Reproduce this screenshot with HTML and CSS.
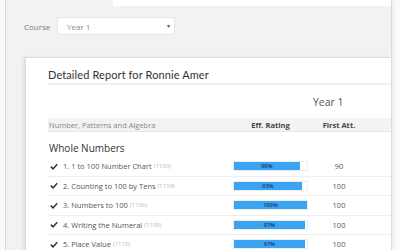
FILE: index.html
```html
<!DOCTYPE html>
<html>
<head>
<meta charset="utf-8">
<link rel="stylesheet" href="styles.css">
</head>
<body>
<div class="page">
  <div class="topbar"></div>
  <div class="filter">
    <span class="filter-label">Course</span>
    <div class="select"><span>Year 1</span><span class="caret">&#9662;</span></div>
  </div>
  <div class="card">
    <h2 class="title">Detailed Report for Ronnie Amer</h2>
    <div class="year-row"><span class="year">Year 1</span></div>
    <div class="head-row">
      <span class="c-name">Number, Patterns and Algebra</span>
      <span class="c-rating">Eff. Rating</span>
      <span class="c-first">First Att.</span>
    </div>
    <div class="section">Whole Numbers</div>
    <div class="row">
      <span class="c-name"><svg class="check" viewBox="0 0 10 8"><path d="M1 4.2 L3.8 7 L9 1.2" fill="none" stroke="#333" stroke-width="1.9"/></svg>1. 1 to 100 Number Chart <span class="code">(1100)</span></span>
      <span class="c-rating"><span class="bar"><span class="fill" style="width:90%">90%</span></span></span>
      <span class="c-first">90</span>
    </div>
    <div class="row">
      <span class="c-name"><svg class="check" viewBox="0 0 10 8"><path d="M1 4.2 L3.8 7 L9 1.2" fill="none" stroke="#333" stroke-width="1.9"/></svg>2. Counting to 100 by Tens <span class="code">(1104)</span></span>
      <span class="c-rating"><span class="bar"><span class="fill" style="width:93%">93%</span></span></span>
      <span class="c-first">100</span>
    </div>
    <div class="row">
      <span class="c-name"><svg class="check" viewBox="0 0 10 8"><path d="M1 4.2 L3.8 7 L9 1.2" fill="none" stroke="#333" stroke-width="1.9"/></svg>3. Numbers to 100 <span class="code">(1106)</span></span>
      <span class="c-rating"><span class="bar"><span class="fill" style="width:100%">100%</span></span></span>
      <span class="c-first">100</span>
    </div>
    <div class="row">
      <span class="c-name"><svg class="check" viewBox="0 0 10 8"><path d="M1 4.2 L3.8 7 L9 1.2" fill="none" stroke="#333" stroke-width="1.9"/></svg>4. Writing the Numeral <span class="code">(1108)</span></span>
      <span class="c-rating"><span class="bar"><span class="fill" style="width:97%">97%</span></span></span>
      <span class="c-first">100</span>
    </div>
    <div class="row">
      <span class="c-name"><svg class="check" viewBox="0 0 10 8"><path d="M1 4.2 L3.8 7 L9 1.2" fill="none" stroke="#333" stroke-width="1.9"/></svg>5. Place Value <span class="code">(1110)</span></span>
      <span class="c-rating"><span class="bar"><span class="fill" style="width:97%">97%</span></span></span>
      <span class="c-first">100</span>
    </div>
  </div>
</div>
</body>
</html>
```

FILE: styles.css
```css
html, body {
  margin: 0;
  padding: 0;
  background: #fafafa;
  font-family: "Open Sans", "Liberation Sans", sans-serif;
  width: 400px;
  height: 250px;
  overflow: hidden;
}

.page {
  margin-left: 5px;
  width: 385px;
  height: 250px;
  background: #f2f2f2;
  border-left: 1px solid #d8d8d8;
  border-right: 1px solid #dcdcdc;
  box-shadow: 2px 0 3px rgba(0,0,0,0.06);
  overflow: hidden;
}

.topbar {
  margin-left: 107px;
  height: 6px;
  background: #fff;
}

.filter {
  display: flex;
  align-items: center;
  margin-top: 11px;
  padding-left: 18px;
  height: 18px;
}

.filter-label {
  font-size: 8px;
  color: #7a7a7a;
  width: 33px;
}

.select {
  box-sizing: border-box;
  width: 118px;
  height: 18px;
  background: #fff;
  border: 1px solid #e6e6e6;
  border-radius: 2px;
  display: flex;
  align-items: center;
  justify-content: space-between;
  padding: 0 4px 0 9px;
  font-size: 8px;
  color: #8a8a8a;
}

.caret {
  font-size: 6px;
  color: #555;
}

.card {
  margin-top: 22px;
  margin-left: 19px;
  background: #fff;
  border: 1px solid #dcdcdc;
  border-right: none;
  box-shadow: -2px 0 3px rgba(0,0,0,0.08);
  height: 300px;
  padding-left: 22px;
}

.title {
  margin: 0;
  padding-top: 10px;
  height: 15px;
  font-family: "Lato", "Open Sans", sans-serif;
  font-weight: normal;
  font-size: 11px;
  line-height: 13px;
  letter-spacing: 0.1px;
  color: #333;
  border-bottom: 2px solid #efefef;
}

.year-row {
  height: 33px;
  display: flex;
  align-items: center;
}

.year {
  margin-left: 265px;
  font-size: 10.5px;
  color: #555;
}

.head-row, .row {
  display: flex;
  align-items: center;
}

.head-row {
  height: 13px;
  background: #f3f3f3;
  font-size: 7.5px;
  color: #888;
  border-bottom: 1px solid #e8e8e8;
}

.c-name {
  width: 184px;
  padding-left: 1px;
  display: flex;
  align-items: center;
  white-space: nowrap;
}

.c-rating {
  width: 75px;
  display: flex;
}

.c-first {
  width: 50px;
  margin-left: 6px;
  text-align: center;
}

.head-row .c-rating {
  justify-content: center;
  font-weight: bold;
  color: #444;
}

.head-row .c-first {
  font-weight: bold;
  color: #444;
}

.section {
  height: 25px;
  display: flex;
  align-items: flex-end;
  padding-left: 1px;
  padding-bottom: 0;
  box-sizing: border-box;
  font-size: 10px;
  line-height: 17px;
  color: #333;
}

.row {
  height: 18.5px;
  border-bottom: 1px solid #eee;
  font-size: 7.5px;
  color: #555;
}

.check {
  width: 8px;
  height: 7px;
  margin-left: 1px;
  margin-right: 5px;
}

.code {
  font-size: 6px;
  color: #b8b8b8;
  margin-left: 2px;
}

.bar {
  display: block;
  width: 75px;
  height: 10px;
  background: #fff;
  border: 1px solid #eee;
  box-sizing: border-box;
}

.fill {
  display: block;
  height: 100%;
  background: #3aa3f2;
  font-size: 5.5px;
  font-weight: bold;
  color: #1b4e84;
  text-align: center;
  line-height: 8px;
}

.row .c-first {
  color: #555;
}
```
